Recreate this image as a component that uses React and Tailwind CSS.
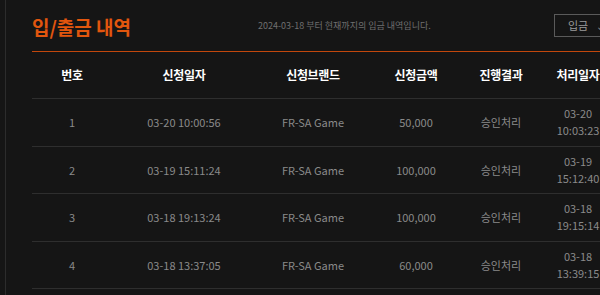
import React from 'react';

// --- deposit / withdraw history rows ---
const rows = [
  { no: 1, date: '03-20 10:00:56', brand: 'FR-SA Game', amount: '50,000', status: '승인처리', done: ['03-20', '10:03:23'] },
  { no: 2, date: '03-19 15:11:24', brand: 'FR-SA Game', amount: '100,000', status: '승인처리', done: ['03-19', '15:12:40'] },
  { no: 3, date: '03-18 19:13:24', brand: 'FR-SA Game', amount: '100,000', status: '승인처리', done: ['03-18', '19:15:14'] },
  { no: 4, date: '03-18 13:37:05', brand: 'FR-SA Game', amount: '60,000', status: '승인처리', done: ['03-18', '13:39:15'] },
];

const cols = ['w-[80px]', 'w-[144px]', 'w-[114px]', 'w-[92px]', 'w-[78px]', 'w-[76px]'];

export default function App() {
  return (
    <div
      className="h-[295px] w-[600px] overflow-hidden bg-[#151515] pl-[5px]"
      style={{ fontFamily: '"Noto Sans CJK KR", "Noto Sans", sans-serif' }}
    >
      <div className="h-full border-l border-[#2c2c2c] pl-[26px]">
        <div className="w-[620px]">
          {/* title bar */}
          <div className="flex h-[52px] items-center border-b border-[#c2470c]">
            <div className="w-[226px] shrink-0 pt-[1px]">
              <h1 className="text-[19px] font-bold leading-none text-[#e2560e]">입/출금 내역</h1>
            </div>
            <p className="w-[296px] shrink-0 text-[9px] text-[#6f6f6f]">
              2024-03-18 부터 현재까지의 입금 내역입니다.
            </p>
            <button className="flex h-[23px] items-center gap-[8px] border border-[#5a5a5a] pl-[13px] pr-[12px] text-[11px] text-[#9a9a9a]">
              <span>입금</span>
              <span className="text-[10px] text-[#888]">⌄</span>
            </button>
          </div>

          {/* header */}
          <div className="flex h-[47px] items-center border-b border-[#2e2e2e]">
            {['번호', '신청일자', '신청브랜드', '신청금액', '진행결과', '처리일자'].map((h, i) => (
              <div key={h} className={`${cols[i]} shrink-0 text-center text-[12px] font-bold tracking-[-0.3px] text-white`}>
                {h}
              </div>
            ))}
          </div>

          {/* rows */}
          {rows.map(r => (
            <div key={r.no} className="flex h-[47.5px] items-center border-b border-[#2e2e2e] text-[11px] text-[#8a8a8a]">
              <div className={`${cols[0]} shrink-0 text-center`}>{r.no}</div>
              <div className={`${cols[1]} shrink-0 text-center`}>{r.date}</div>
              <div className={`${cols[2]} shrink-0 text-center`}>{r.brand}</div>
              <div className={`${cols[3]} shrink-0 text-center`}>{r.amount}</div>
              <div className={`${cols[4]} shrink-0 text-center`}>{r.status}</div>
              <div className={`${cols[5]} shrink-0 text-center leading-[17px]`}>
                <div>{r.done[0]}</div>
                <div>{r.done[1]}</div>
              </div>
            </div>
          ))}
        </div>
      </div>
    </div>
  );
}
